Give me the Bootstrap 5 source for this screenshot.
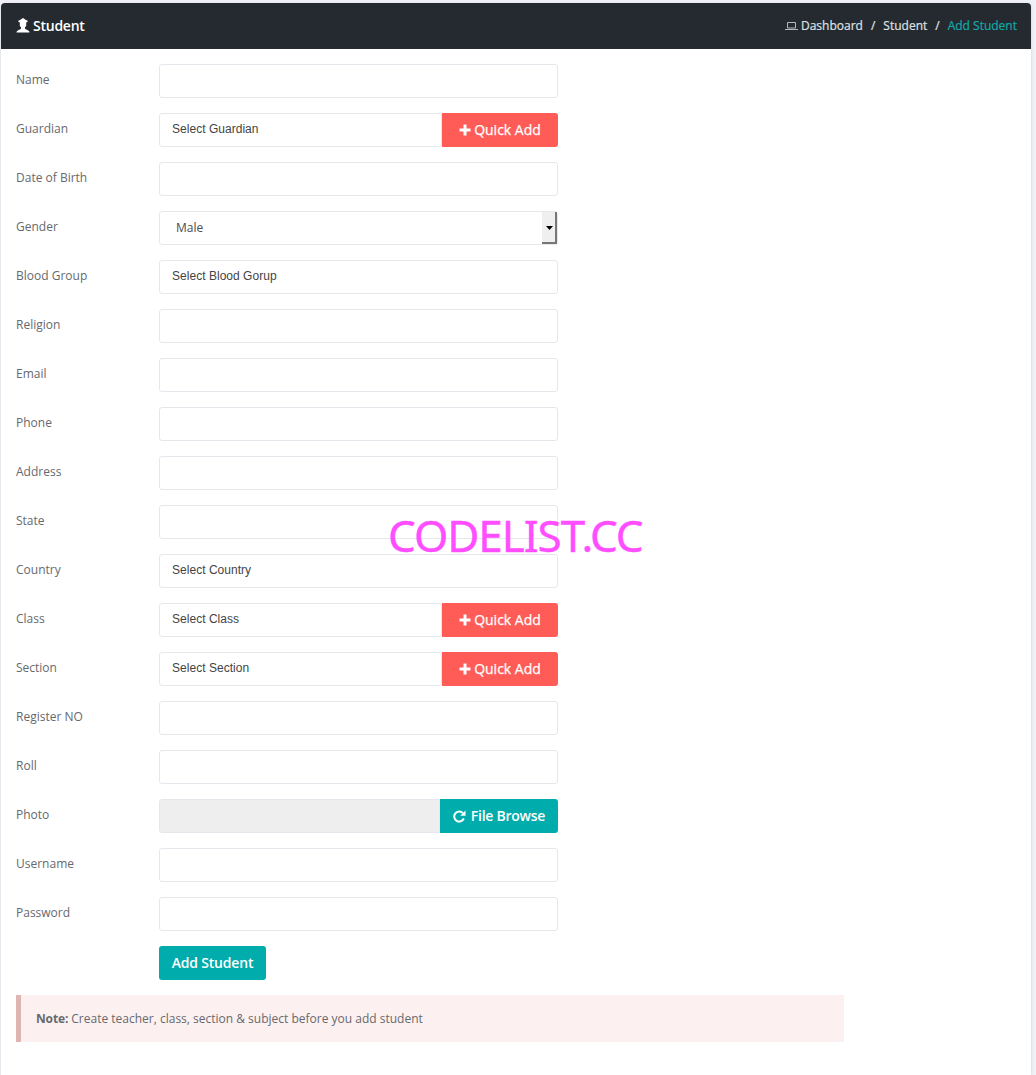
<!DOCTYPE html>
<html lang="en">
<head>
<meta charset="utf-8">
<meta name="viewport" content="width=device-width, initial-scale=1">
<title>Add Student</title>
<link href="https://cdn.jsdelivr.net/npm/bootstrap@5.3.0/dist/css/bootstrap.min.css" rel="stylesheet">
<style>
body{background:#f0f1f6;font-family:"Open Sans",sans-serif;font-size:12px;line-height:17px;color:#66696e;overflow:hidden}
.panel-box{margin:3px 5px 0 1px;width:1030px;height:1072px;background:#fff;border-radius:4px 4px 0 0;box-shadow:-1px 0 #e6e8ee,1px 0 2px #dcdfe8}
.panel-head{height:46px;background:#242a30;border-radius:4px 4px 0 0;padding:0 14px 0 15px;color:#fff}
.panel-title{font-size:14px;font-weight:600;letter-spacing:-.25px;line-height:20px}
.panel-title svg{margin-right:3px;position:relative;top:-1px}
.crumbs{--bs-breadcrumb-divider-color:#ddd;font-size:12px;color:#dfe1e3;padding-bottom:2px;-webkit-text-stroke:.2px}
.crumbs .breadcrumb-item+.breadcrumb-item{padding-left:8px}
.crumbs .breadcrumb-item+.breadcrumb-item::before{padding-right:8px;color:#e4e5e6}
.crumbs .breadcrumb-item.active{color:#14a8a6}
.crumbs svg{margin-right:3px}
.form-area{padding:15px 15px 0}
.field-row{display:flex;height:34px;margin-bottom:15px}
.field-label{width:143px;padding-top:7px;flex:none}
.field-wrap{width:399px;flex:none}
.field-wrap .form-control{height:34px;min-height:34px;border:1px solid #e4e8ec;border-radius:3px;padding:6px 12px;font-size:12px;line-height:19px;color:#494d51;background:#fff}
.field-wrap .pick{font-family:"Liberation Sans",Arial,sans-serif;color:#444;line-height:18px;letter-spacing:.03px}
.field-wrap .form-control.gender{padding:0 0 0 16px;display:flex;justify-content:space-between;align-items:center}
.gender span:first-child{padding-bottom:2px}
.drop{width:15px;height:32px;background:#efefef;border-right:2px solid #777;border-bottom:2px solid #777;display:flex;align-items:center;justify-content:center;padding:1px 0 0 1px}
.field-wrap .form-control.nofill{background:#eee}
.btn.act{height:34px;border:0;border-radius:3px;color:#fff;font-size:14px;line-height:20px;padding:0;display:flex;align-items:center;justify-content:center;white-space:nowrap;flex:none}
.btn.quick{background:#ff5b57;width:116px;border-radius:0 3px 3px 0;gap:3px;-webkit-text-stroke:.25px}
.btn.teal{background:#00acac}
.btn.browse{width:118px;border-radius:0 3px 3px 0;font-weight:600;gap:5px;letter-spacing:-.25px}
.btn.send{width:107px;font-weight:600;letter-spacing:-.2px}
.note-box{width:828px;height:47px;border-left:5px solid #dfb5b4;background:#fcf1f0;padding:15px;line-height:17px}
.note-box b{letter-spacing:-.15px}
.stamp{position:absolute;left:388px;top:505px;font:44px/60px "Noto Sans",sans-serif;letter-spacing:-1.05px;color:#ff4dff;-webkit-text-stroke:.4px;white-space:nowrap}
</style>
</head>
<body>
<main class="panel-box">
<header class="panel-head d-flex align-items-center justify-content-between">
<div class="panel-title d-flex align-items-center"><svg width="14" height="15" viewBox="0 0 14 15" fill="#fff"><path d="M2 3 4 2l3-2 3 2 2 1-1 1.300h-.8V8L9 9.300v1.500l4 2.200.6 1.500H.4L1 13l4-2.200V9.300L3.800 8V4.300H3z"/></svg><span>Student</span></div>
<ol class="breadcrumb crumbs mb-0">
<li class="breadcrumb-item"><svg width="13" height="10" viewBox="0 0 13 10" fill="none" stroke="#b5b8ba"><path d="M2.500 7V1.500h8V7zM0 8.500h13"/></svg>Dashboard</li>
<li class="breadcrumb-item">Student</li>
<li class="breadcrumb-item active">Add Student</li>
</ol>
</header>
<form class="form-area">
<div class="field-row"><label class="field-label">Name</label><div class="field-wrap"><input class="form-control"></div></div>
<div class="field-row"><label class="field-label">Guardian</label><div class="field-wrap d-flex"><div class="form-control pick">Select Guardian</div><button type="button" class="btn act quick"><svg width="12" height="12" viewBox="0 0 12 12" fill="#fff"><path d="M4.500.5h3v4H11.500v3h-4v4h-3v-4h-4v-3h4z"/></svg>Quick Add</button></div></div>
<div class="field-row"><label class="field-label">Date of Birth</label><div class="field-wrap"><input class="form-control"></div></div>
<div class="field-row"><label class="field-label">Gender</label><div class="field-wrap"><div class="form-control gender"><span>Male</span><span class="drop"><svg width="7" height="4" viewBox="0 0 7 4"><path d="M0 0h7L3.500 4z"/></svg></span></div></div></div>
<div class="field-row"><label class="field-label">Blood Group</label><div class="field-wrap"><div class="form-control pick">Select Blood Gorup</div></div></div>
<div class="field-row"><label class="field-label">Religion</label><div class="field-wrap"><input class="form-control"></div></div>
<div class="field-row"><label class="field-label">Email</label><div class="field-wrap"><input class="form-control"></div></div>
<div class="field-row"><label class="field-label">Phone</label><div class="field-wrap"><input class="form-control"></div></div>
<div class="field-row"><label class="field-label">Address</label><div class="field-wrap"><input class="form-control"></div></div>
<div class="field-row"><label class="field-label">State</label><div class="field-wrap"><input class="form-control"></div></div>
<div class="field-row"><label class="field-label">Country</label><div class="field-wrap"><div class="form-control pick">Select Country</div></div></div>
<div class="field-row"><label class="field-label">Class</label><div class="field-wrap d-flex"><div class="form-control pick">Select Class</div><button type="button" class="btn act quick"><svg width="12" height="12" viewBox="0 0 12 12" fill="#fff"><path d="M4.500.5h3v4H11.500v3h-4v4h-3v-4h-4v-3h4z"/></svg>Quick Add</button></div></div>
<div class="field-row"><label class="field-label">Section</label><div class="field-wrap d-flex"><div class="form-control pick">Select Section</div><button type="button" class="btn act quick"><svg width="12" height="12" viewBox="0 0 12 12" fill="#fff"><path d="M4.500.5h3v4H11.500v3h-4v4h-3v-4h-4v-3h4z"/></svg>Quick Add</button></div></div>
<div class="field-row"><label class="field-label">Register NO</label><div class="field-wrap"><input class="form-control"></div></div>
<div class="field-row"><label class="field-label">Roll</label><div class="field-wrap"><input class="form-control"></div></div>
<div class="field-row"><label class="field-label">Photo</label><div class="field-wrap d-flex"><input class="form-control nofill rounded-end-0" disabled><button type="button" class="btn act teal browse"><svg width="13" height="13" viewBox="0 0 13 13" fill="none"><path d="M10.800 8.500A5 5 0 1 1 9.800 3" stroke="#fff" stroke-width="2"/><path d="M12.500.5v5.300H7.300z" fill="#fff"/></svg>File Browse</button></div></div>
<div class="field-row"><label class="field-label">Username</label><div class="field-wrap"><input class="form-control"></div></div>
<div class="field-row"><label class="field-label">Password</label><div class="field-wrap"><input class="form-control"></div></div>
<div class="field-row"><span class="field-label"></span><button type="button" class="btn act teal send">Add Student</button></div>
<div class="note-box"><b>Note:</b> Create teacher, class, section &amp; subject before you add student</div>
</form>
</main>
<div class="stamp">CODELIST.CC</div>
<script src="https://cdn.jsdelivr.net/npm/bootstrap@5.3.0/dist/js/bootstrap.bundle.min.js"></script>
</body>
</html>
